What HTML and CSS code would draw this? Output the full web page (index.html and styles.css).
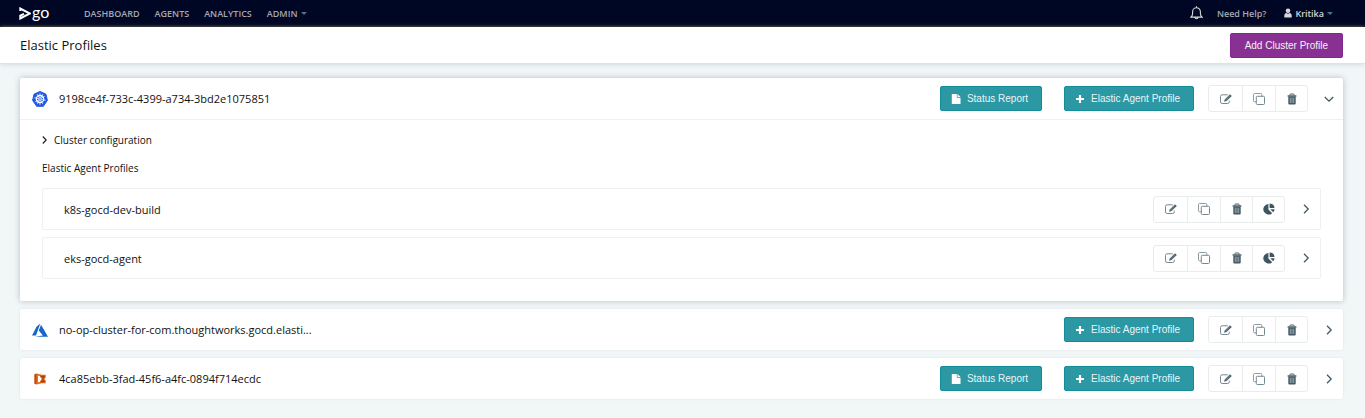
FILE: index.html
```html
<!DOCTYPE html>
<html lang="en">
<head>
<meta charset="utf-8">
<title>Elastic Profiles</title>
<link rel="stylesheet" href="styles.css">
</head>
<body>
<svg class="sprite" aria-hidden="true">
  <symbol id="edit" viewBox="0 0 12 12"><path d="M7.800 1.800H2.200Q.5 1.800.5 3.500v5.300q0 1.700 1.700 1.700h5.400q1.700 0 1.700-1.700V7.600" fill="none" stroke="#758891"/><path d="M4.100 8.700l.6-2.300L10 1.200l1.800 1.700-5.300 5.200z" fill="#4b616b"/><path d="M5.600 6.900l4.300-4.300" stroke="#a9b6bb" stroke-width=".5"/></symbol>
  <symbol id="copy" viewBox="0 0 12 12"><path d="M3.200 8.800H1.600Q.5 8.800.5 7.700V1.600Q.5.5 1.600.5h6.100q1.100 0 1.100 1.100v1.600" fill="none" stroke="#8a9aa2"/><rect x="3.300" y="3.300" width="8.200" height="8.200" rx="1" fill="none" stroke="#758891"/></symbol>
  <symbol id="trash" viewBox="0 0 12 12"><path d="M3.900 2.500v-.8q0-.7.700-.7h2.800q.7 0 .7.700v.8" fill="none" stroke="#435a64"/><path d="M1.600 2.300h8.800v1.400H1.600z" fill="#435a64"/><path d="M2.300 3.500h7.400V10.500q0 1-1 1H3.300q-1 0-1-1z" fill="#435a64"/><path d="M4.300 4.700v5.300M6 4.700v5.300M7.700 4.700v5.300" stroke="#a9b6bb" stroke-width=".8"/></symbol>
  <symbol id="pie" viewBox="0 0 12 12"><path d="M5.400 1v5.400l3.800 3.800A5.300 5.300 0 1 1 5.400 1z" fill="#3f5662"/><path d="M6.600.4a5 5 0 0 1 4.900 4.700H6.600z" fill="#3f5662"/><path d="M7.300 6.300h4.300A5 5 0 0 1 10.100 9.300z" fill="#3f5662"/></symbol>
  <symbol id="chevron" viewBox="0 0 12 12"><path d="M4 1.800L8.200 6 4 10.200" fill="none" stroke="currentColor" stroke-width="1.300"/></symbol>
  <symbol id="plus" viewBox="0 0 10 10"><path d="M5 1v8M1 5h8" stroke="#fff" stroke-width="2.200" fill="none"/></symbol>
  <symbol id="file" viewBox="0 0 10 12"><path d="M.8 1h5v3.700h3.700V11H.8z" fill="#fff"/><path d="M6.500 1l3 3h-3z" fill="#fff"/></symbol>
</svg>

<header class="site-header">
  <a class="logo" href="#" aria-label="go">
    <svg class="logo-mark" viewBox="0 0 12 13"><path d="M1.300 4V1.500L11 6.500 1.300 11.500V8.700L5 6.800" fill="none" stroke="#fff" stroke-width="2"/></svg>
    <span class="logo-text">go</span>
  </a>
  <nav class="nav">
    <a href="#">DASHBOARD</a>
    <a href="#">AGENTS</a>
    <a href="#">ANALYTICS</a>
    <a href="#">ADMIN<span class="caret"></span></a>
  </nav>
  <div class="tools">
    <button class="bell" type="button" aria-label="Notifications"><svg viewBox="0 0 12 13"><path d="M.8 10.300Q2.400 8.900 2.400 7V5.200a3.600 3.600 0 0 1 7.200 0V7q0 1.900 1.600 3.300zM4.600 10.500a1.400 1.400 0 0 0 2.800 0M6 .3v1.300" fill="none" stroke="#ddd"/></svg></button>
    <a class="help" href="#">Need Help?</a>
    <a class="user" href="#"><svg viewBox="0 0 8 10"><circle cx="4" cy="2.700" r="2.300"/><path d="M.3 9.500V7.600Q.3 5.200 2.200 4.900q1.800 1.300 3.600 0Q7.700 5.200 7.700 7.600V9.500z"/></svg>Kritika<span class="caret"></span></a>
  </div>
</header>

<div class="page-header">
  <h1>Elastic Profiles</h1>
  <button class="btn btn-primary" type="button">Add Cluster Profile</button>
</div>

<main class="content">
  <section class="panel open">
    <div class="panel-head">
      <svg class="plugin" viewBox="0 0 16 16"><path d="M8 .500l6 2.700 1.400 6.200L11.300 15.300H4.700L.6 9.400 2 3.200z" fill="#2059e6" stroke="#2059e6" stroke-linejoin="round"/><circle cx="8" cy="8" r="3.700" fill="none" stroke="#fff" stroke-width="1.200"/><path d="M8 2.200v11.600M2.500 6.700l11 2.600M3.300 10.700l9.400-5.400M5.200 3.200l5.600 9.600M10.800 3.200L5.200 12.800" stroke="#fff" stroke-width=".8"/><circle cx="8" cy="8" r=".8" fill="#2059e6"/></svg>
      <h2>9198ce4f-733c-4399-a734-3bd2e1075851</h2>
      <div class="actions">
        <button class="btn" type="button"><svg class="file"><use href="#file"/></svg>Status Report</button>
        <button class="btn" type="button"><svg class="plus"><use href="#plus"/></svg>Elastic Agent Profile</button>
      </div>
      <div class="group">
        <button type="button" aria-label="Edit"><svg><use href="#edit"/></svg></button>
        <button type="button" aria-label="Clone"><svg><use href="#copy"/></svg></button>
        <button type="button" aria-label="Delete"><svg><use href="#trash"/></svg></button>
      </div>
      <button class="toggle down" type="button" aria-label="Collapse"><svg><use href="#chevron"/></svg></button>
    </div>
    <div class="panel-body">
      <button class="config" type="button"><svg viewBox="0 0 5 10"><path d="M.800 1.500L4.200 5 .8 8.500" fill="none" stroke="#222" stroke-width="1.200"/></svg>Cluster configuration</button>
      <h3>Elastic Agent Profiles</h3>
      <div class="profiles">
        <div class="profile">
          <h4>k8s-gocd-dev-build</h4>
          <div class="group">
            <button type="button" aria-label="Edit"><svg><use href="#edit"/></svg></button>
            <button type="button" aria-label="Clone"><svg><use href="#copy"/></svg></button>
            <button type="button" aria-label="Delete"><svg><use href="#trash"/></svg></button>
            <button type="button" aria-label="Usage"><svg><use href="#pie"/></svg></button>
          </div>
          <button class="toggle" type="button" aria-label="Expand"><svg><use href="#chevron"/></svg></button>
        </div>
        <div class="profile">
          <h4>eks-gocd-agent</h4>
          <div class="group">
            <button type="button" aria-label="Edit"><svg><use href="#edit"/></svg></button>
            <button type="button" aria-label="Clone"><svg><use href="#copy"/></svg></button>
            <button type="button" aria-label="Delete"><svg><use href="#trash"/></svg></button>
            <button type="button" aria-label="Usage"><svg><use href="#pie"/></svg></button>
          </div>
          <button class="toggle" type="button" aria-label="Expand"><svg><use href="#chevron"/></svg></button>
        </div>
      </div>
    </div>
  </section>

  <section class="panel">
    <div class="panel-head">
      <svg class="plugin" viewBox="0 0 16 16"><path d="M8.300 1.500L4.500 4.800 0 13.500h4zM9 2.800L6.800 8.600l4.100 4.800-8 1.300H16z" fill="#1766c8"/></svg>
      <h2>no-op-cluster-for-com.thoughtworks.gocd.elasti...</h2>
      <div class="actions">
        <button class="btn" type="button"><svg class="plus"><use href="#plus"/></svg>Elastic Agent Profile</button>
      </div>
      <div class="group">
        <button type="button" aria-label="Edit"><svg><use href="#edit"/></svg></button>
        <button type="button" aria-label="Clone"><svg><use href="#copy"/></svg></button>
        <button type="button" aria-label="Delete"><svg><use href="#trash"/></svg></button>
      </div>
      <button class="toggle" type="button" aria-label="Expand"><svg><use href="#chevron"/></svg></button>
    </div>
  </section>

  <section class="panel">
    <div class="panel-head">
      <svg class="plugin" viewBox="0 0 16 16"><path d="M2.300 3.200L5 2.500v11l-2.700-.7z" fill="#c04c0c"/><path d="M4.500 2.500l4.300 1v1.700L6 4.800v6.400l2.800-.4v1.700l-4.300 1z" fill="#e4701e"/><path d="M8 3.800h5.700v3L12.500 8l1.200 1.200v3H8V10.200L9.800 8 8 5.800z" fill="#d9601a"/><path d="M9 5.500h3.700M9 10.500h3.700M11 6v4" stroke="#a33f08"/><path d="M12.400 8l1.600-1.300v2.600z" fill="#fff"/></svg>
      <h2>4ca85ebb-3fad-45f6-a4fc-0894f714ecdc</h2>
      <div class="actions">
        <button class="btn" type="button"><svg class="file"><use href="#file"/></svg>Status Report</button>
        <button class="btn" type="button"><svg class="plus"><use href="#plus"/></svg>Elastic Agent Profile</button>
      </div>
      <div class="group">
        <button type="button" aria-label="Edit"><svg><use href="#edit"/></svg></button>
        <button type="button" aria-label="Clone"><svg><use href="#copy"/></svg></button>
        <button type="button" aria-label="Delete"><svg><use href="#trash"/></svg></button>
      </div>
      <button class="toggle" type="button" aria-label="Expand"><svg><use href="#chevron"/></svg></button>
    </div>
  </section>
</main>
</body>
</html>
```
FILE: styles.css
```css
* { box-sizing: border-box; }
body {
  margin: 0;
  background: #f1f6f7;
  color: #111;
  font-family: "Open Sans", "Noto Sans", sans-serif;
  font-size: 11px;
}
h1, h2, h3, h4 { margin: 0; font-weight: 500; }
a { color: inherit; text-decoration: none; }
button { border: 0; padding: 0; background: none; color: inherit; font: inherit; cursor: pointer; }
svg { display: block; flex: none; }
.sprite { display: none; }

.site-header {
  display: flex;
  align-items: center;
  height: 27px;
  padding: 0 32px 0 19px;
  background: #000724;
  border-bottom: 1px solid #000;
  color: #a5a8b2;
  font-size: 9px;
  font-weight: 600;
}
.logo { display: flex; align-items: center; gap: 1px; color: #fff; width: 65px; }
.logo-mark { width: 12px; height: 13px; }
.logo-text { font-family: Lato, sans-serif; font-size: 16px; font-weight: 400; line-height: 20px; padding-bottom: 2px; }
.nav { display: flex; gap: 15px; }
.caret {
  display: inline-block;
  margin-left: 4px;
  vertical-align: 2px;
  border: 3px solid transparent;
  border-top-color: #527181;
  border-bottom: 0;
}
.tools { display: flex; align-items: center; margin-left: auto; }
.bell svg { width: 13px; height: 14px; }
.help { margin: 0 18px 0 14px; }
.user { color: #d5d7dc; display: flex; align-items: center; gap: 3px; }
.user .caret { margin-left: 0; }
.user svg { width: 8px; height: 10px; fill: #d5d7dc; }

.page-header {
  display: flex;
  align-items: center;
  justify-content: space-between;
  height: 37px;
  padding: 0 22px 0 20px;
  background: #fff;
  border-bottom: 1px solid #dde2e3;
  box-shadow: 0 1px 4px #d5dddf;
}
h1 { font-size: 13px; }

.btn {
  display: flex;
  align-items: center;
  height: 25px;
  padding: 0 13px 0 10px;
  border: 1px solid #148d9b;
  border-radius: 2px;
  background: #2b98a4;
  color: #e9f5f6;
  font-family: "Liberation Sans", Arial, sans-serif;
  font-size: 10px;
  white-space: nowrap;
}
.btn-primary { padding: 0 14px; background: #893093; border-color: #832590; color: #f7eef8; }
.plus { width: 10px; height: 10px; margin-right: 6px; }
.file { width: 10px; height: 12px; margin-right: 6px; }

.content { display: flex; flex-direction: column; gap: 8px; padding: 14px 22px 18px 20px; }
.panel { background: #fff; border-radius: 2px; box-shadow: 0 0 2px #d8dfe1; }
.panel.open { box-shadow: 0 0 6px #b5bec1; }
.panel-head { display: flex; align-items: center; height: 41px; padding-left: 12px; }
.open .panel-head { height: 42px; border-bottom: 1px solid #eef0f1; }
.plugin { width: 16px; height: 16px; margin-right: 11px; }
h2, h4 { font-size: 11px; flex: 1; }
.actions { display: flex; gap: 22px; margin-right: 14px; }

.group { display: flex; border: 1px solid #e9eced; border-radius: 3px; }
.group button { display: flex; align-items: center; justify-content: center; width: 33px; height: 25px; }
.group button + button { border-left: 1px solid #e9eced; }
.group button:nth-child(n+3) { width: 32px; }
.group svg { width: 12px; height: 12px; }

.toggle { display: flex; align-items: center; justify-content: center; width: 28px; height: 26px; margin-left: 7px; color: #435a64; }
.toggle svg { width: 12px; height: 12px; }
.down svg { transform: rotate(90deg); }

.panel-body { padding: 11px 22px 22px; }
.config { display: flex; align-items: center; gap: 7px; height: 18px; font-size: 10px; font-weight: 500; }
.config svg { width: 5px; height: 10px; }
h3 { margin: 11px 0 12px; font-size: 10px; line-height: 16px; }
.profiles { display: flex; flex-direction: column; gap: 7px; }
.profile { display: flex; align-items: center; height: 42px; padding-left: 21px; border: 1px solid #eef0f1; border-radius: 2px; }
```
